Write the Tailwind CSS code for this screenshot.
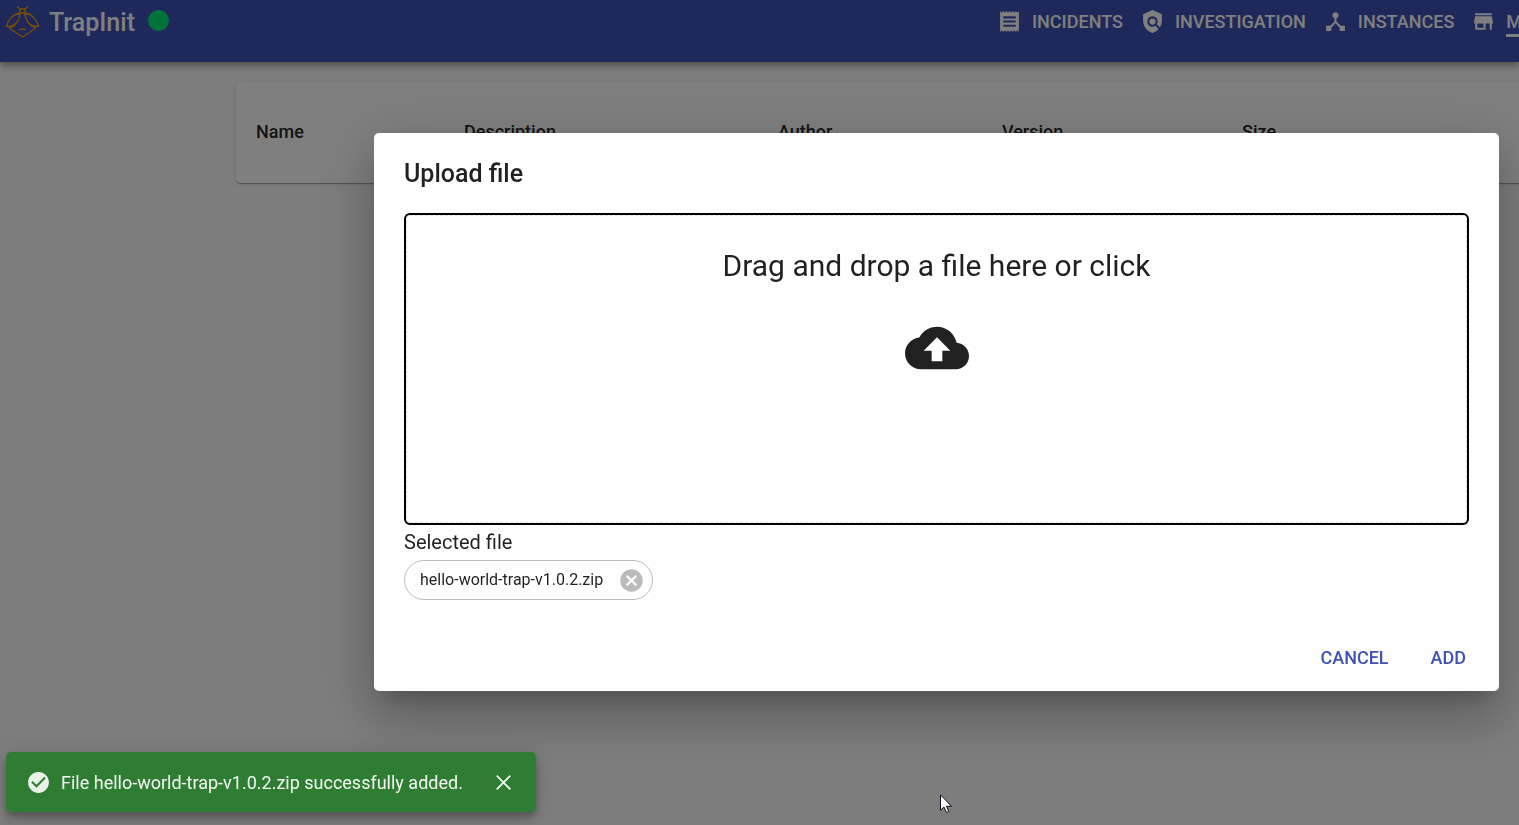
<!DOCTYPE html>
<html lang="en">
<head>
<meta charset="utf-8">
<meta name="viewport" content="width=device-width, initial-scale=1">
<title>TrapInit</title>
<script src="https://cdn.jsdelivr.net/npm/@tailwindcss/browser@4"></script>
</head>
<body class="min-h-screen overflow-hidden bg-[#fafafa] font-[Roboto,sans-serif] text-black/87">
  <header class="relative flex h-[62px] items-start overflow-hidden bg-[#3f51b5] pl-1 text-white shadow-[0_3px_5px_-1px_rgba(0,0,0,0.2),0_5px_6px_rgba(0,0,0,0.14),0_1px_12px_rgba(0,0,0,0.12)]">
    <a href="#" class="flex items-center gap-[9px] pt-[5px]">
      <svg class="h-9 w-9" viewBox="0 1 36 36" fill="none" stroke-width="1.4" aria-hidden="true">
        <path d="M15 5 4 11v7M22 5l11 6v7" stroke="#1d6a9c"/>
        <g stroke="#f59a0c">
          <path d="M13 2.500l3 2.500h5l3-2.500M16 5v4h5V5M16 9c-7 1-12 7-13.500 13 7 2 13-4 13.500-13M21 9c7 1 12 7 13.500 13-7 2-13-4-13.500-13"/>
          <path d="M5 23.500l6-2M32 23.500l-6-2M5 24l13.500 9L32 24M15 26q3.500-2 7 0"/>
        </g>
      </svg>
      <span class="text-[25px] leading-9 font-medium">TrapInit</span>
    </a>
    <span class="mt-[10px] ml-[13px] size-[21px] rounded-full bg-[#00e676]" role="status" aria-label="Online"></span>
    <nav class="ml-auto flex w-[522px] shrink-0 gap-[17px] overflow-hidden pt-[9px] text-[18px] leading-[25px] font-medium whitespace-nowrap">
      <a href="#" class="flex shrink-0 gap-[10px]">
        <svg class="size-[25px]" viewBox="0 0 24 24" fill="currentColor" aria-hidden="true"><path d="M18 17H6v-2h12v2zm0-4H6v-2h12v2zm0-4H6V7h12v2zM3 22l1.500-1.500L6 22l1.500-1.500L9 22l1.500-1.500L12 22l1.500-1.500L15 22l1.500-1.500L18 22l1.500-1.500L21 22V2l-1.500 1.500L18 2l-1.500 1.500L15 2l-1.500 1.500L12 2l-1.500 1.500L9 2 7.500 3.500 6 2 4.500 3.500 3 2v20z"/></svg>
        <span>INCIDENTS</span>
      </a>
      <a href="#" class="flex shrink-0 gap-[10px]">
        <svg class="size-[25px]" viewBox="0 0 24 24" fill="currentColor" aria-hidden="true"><path d="M21 5l-9-4-9 4v6c0 5.550 3.840 10.740 9 12 2.300-.560 4.330-1.900 5.880-3.710l-3.120-3.120c-1.940 1.290-4.580 1.070-6.290-.640-1.950-1.950-1.950-5.120 0-7.070 1.950-1.950 5.120-1.950 7.070 0 1.710 1.710 1.920 4.350.640 6.290l2.900 2.900C20.290 15.690 21 13.380 21 11V5z"/><circle cx="12" cy="12" r="3"/></svg>
        <span>INVESTIGATION</span>
      </a>
      <a href="#" class="flex shrink-0 gap-[10px]">
        <svg class="size-[25px]" viewBox="0 0 24 24" fill="currentColor" aria-hidden="true"><path d="M17 16l-4-4V8.820C14.160 8.400 15 7.300 15 6c0-1.660-1.340-3-3-3S9 4.340 9 6c0 1.300.840 2.400 2 2.820V12l-4 4H3v5h5v-3.050l4-4.200 4 4.200V21h5v-5h-4z"/></svg>
        <span>INSTANCES</span>
      </a>
      <a href="#" class="flex shrink-0 gap-[10px]" aria-current="page">
        <svg class="size-[25px]" viewBox="0 0 24 24" fill="currentColor" aria-hidden="true"><path d="M20 4H4v2h16V4zm1 10v-2l-1-5H4l-1 5v2h1v6h10v-6h4v6h2v-6h1zm-9 4H6v-4h6v4z"/></svg>
        <span class="border-b-3 border-white">MARKETPLACE</span>
      </a>
    </nav>
  </header>

  <main class="overflow-hidden pt-5 pb-5 pl-[236px]">
    <div class="-mr-2 rounded-[5px] bg-white shadow-[0_2px_1px_-1px_rgba(0,0,0,0.2),0_1px_1px_rgba(0,0,0,0.14),0_1px_4px_rgba(0,0,0,0.12)]">
      <table class="w-full table-fixed text-left text-[18px] leading-[25px]">
        <colgroup><col class="w-[208px]"><col class="w-[314px]"><col class="w-[224px]"><col class="w-[240px]"><col></colgroup>
        <thead>
          <tr class="h-[101px]">
            <th class="pb-[2px] pl-5 font-medium">Name</th>
            <th class="pb-[2px] pl-5 font-medium">Description</th>
            <th class="pb-[2px] pl-5 font-medium">Author</th>
            <th class="pb-[2px] pl-5 font-medium">Version</th>
            <th class="pb-[2px] pl-5 font-medium">Size</th>
          </tr>
        </thead>
      </table>
    </div>
  </main>

  <div class="fixed inset-0 bg-black/50 pt-[133px] pr-5 pl-[374px]">
    <section role="dialog" aria-modal="true" aria-labelledby="upload-title" class="rounded-[5px] bg-white shadow-[0_14px_19px_-9px_rgba(0,0,0,0.2),0_30px_48px_4px_rgba(0,0,0,0.14),0_11px_58px_10px_rgba(0,0,0,0.12)]">
      <h2 id="upload-title" class="px-[30px] pt-[21px] pb-[19px] text-[25px] leading-10 font-medium">Upload file</h2>
      <div class="px-[30px]">
        <button type="button" class="flex h-[312px] w-full flex-col items-center rounded-md border-2 border-black p-0">
          <span class="flex w-full grow flex-col items-center rounded-sm border border-dashed border-black/12 pt-[30px]">
            <span class="text-[30px] leading-10">Drag and drop a file here or click</span>
            <svg class="mt-[30px] size-16" viewBox="0 0 24 24" fill="#212121" aria-hidden="true"><path d="M19.350 10.040C18.670 6.590 15.640 4 12 4 9.110 4 6.600 5.640 5.350 8.040 2.340 8.360 0 10.910 0 14c0 3.310 2.690 6 6 6h13c2.760 0 5-2.240 5-5 0-2.640-2.050-4.780-4.650-4.960zM14 13v4h-4v-4H7l5-5 5 5h-3z"/></svg>
          </span>
        </button>
        <p class="pt-[2px] text-[20px] leading-[30px]">Selected file</p>
        <div class="mt-[3px] inline-flex h-10 items-center gap-[15px] rounded-full border border-[#bdbdbd] pr-[7px] pl-[15px] align-top">
          <span class="text-[16px] leading-6">hello-world-trap-v1.0.2.zip</span>
          <button type="button" aria-label="Remove file" class="text-[#bbbbbb]">
            <svg class="size-[27px]" viewBox="0 0 24 24" fill="currentColor" aria-hidden="true"><path d="M12 2C6.470 2 2 6.470 2 12s4.470 10 10 10 10-4.470 10-10S17.530 2 12 2zm5 13.590L15.590 17 12 13.410 8.410 17 7 15.590 10.590 12 7 8.410 8.410 7 12 10.590 15.590 7 17 8.410 13.410 12 17 15.590z"/></svg>
          </button>
        </div>
      </div>
      <div class="mt-[30px] flex justify-end gap-[22px] px-[23px] pt-2 pb-[13px] text-[18px] leading-10 font-medium text-[#3f51b5]">
        <button type="button" class="px-[10px]">CANCEL</button>
        <button type="button" class="px-[10px]">ADD</button>
      </div>
    </section>
  </div>

  <div role="alert" class="fixed bottom-[13px] left-[6px] flex h-[60px] w-[530px] items-center rounded-[5px] bg-[#2e7d32] pr-5 pl-5 text-[18px] text-white/95 shadow-[0_4px_6px_-1px_rgba(0,0,0,0.2),0_8px_12px_rgba(0,0,0,0.14),0_1px_22px_rgba(0,0,0,0.12)]">
    <svg class="size-[25px] opacity-95" viewBox="0 0 24 24" fill="currentColor" aria-hidden="true"><path d="M12 2C6.500 2 2 6.500 2 12s4.500 10 10 10 10-4.500 10-10S17.500 2 12 2zm-2 15-5-5 1.410-1.410L10 14.170l7.590-7.590L19 8l-9 9z"/></svg>
    <span class="ml-[10px] whitespace-nowrap">File hello-world-trap-v1.0.2.zip successfully added.</span>
    <button type="button" aria-label="Close" class="ml-auto">
      <svg class="size-[25px]" viewBox="0 0 24 24" fill="none" stroke="currentColor" stroke-width="1.700" aria-hidden="true"><path d="M5.500 5.500l13 13M18.500 5.500l-13 13"/></svg>
    </button>
  </div>

  <svg class="pointer-events-none fixed top-[794px] left-[940px] h-5 w-3" viewBox="0 0 12 20" aria-hidden="true"><path d="M.500.800v15.500l3.500-3.300 2.500 5.500 2.300-1-2.300-5.200h5z" fill="#fff" stroke="#0b0b1c" stroke-width="1"/></svg>
</body>
</html>
